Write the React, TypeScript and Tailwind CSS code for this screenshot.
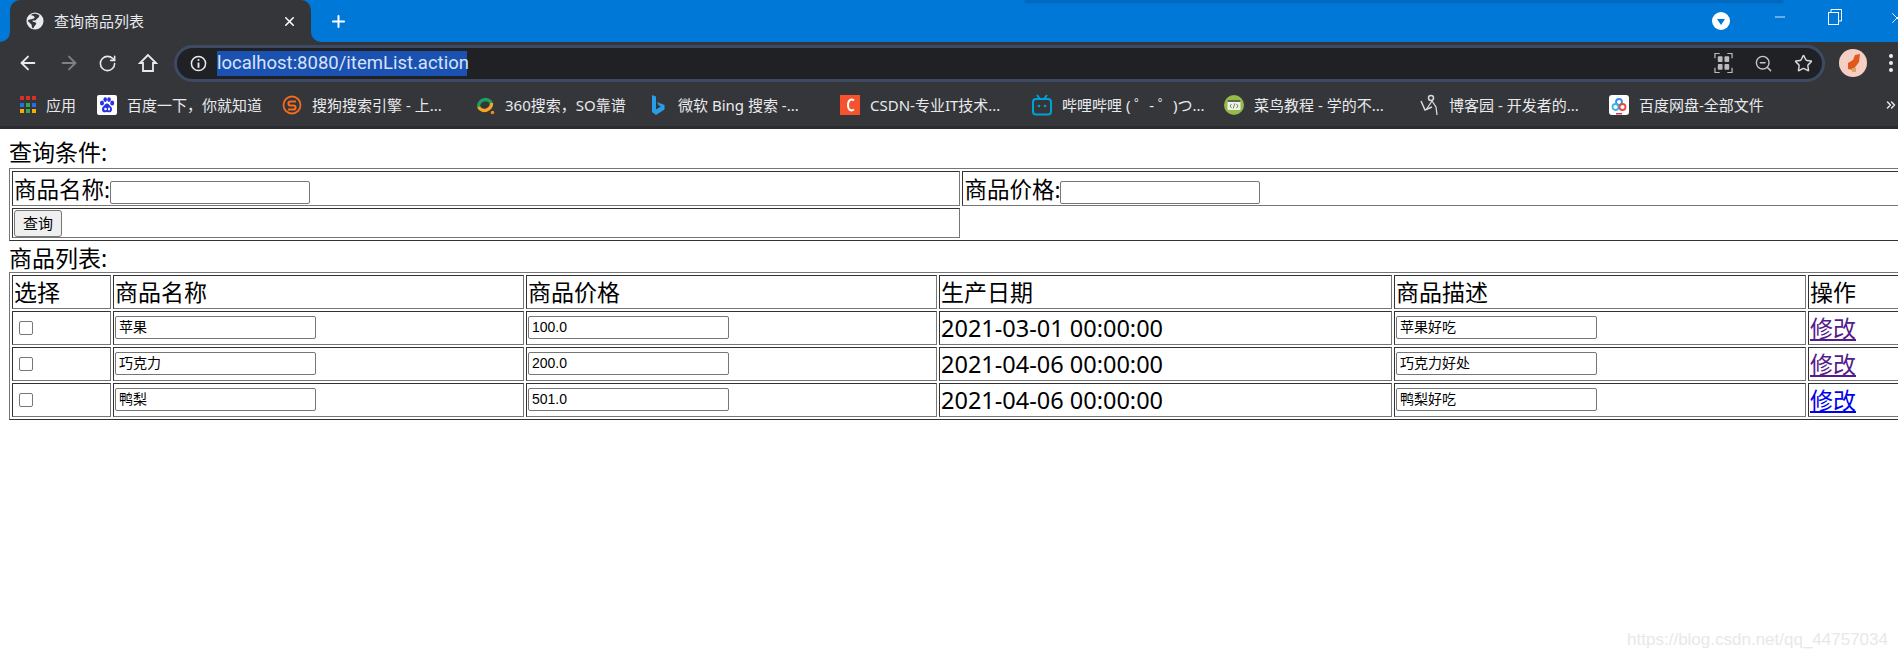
import { ArrowLeft, ArrowRight, RotateCw, ZoomOut, Star, X, Plus, Minus, ChevronsRight } from 'lucide-react';

const cjk = "font-['Noto_Sans','Noto_Sans_CJK_SC',sans-serif]";

function AppsIcon() {
  const colors = ['#d93025', '#d93025', '#d93025', '#1a73e8', '#34a853', '#1a73e8', '#f9ab00', '#34a853', '#f9ab00'];
  return (
    <span className="grid grid-cols-3 gap-[2px] w-[16px] h-[18px]">
      {colors.map((c, i) => (
        <svg key={i} viewBox="0 0 4 4" className="w-[4px] h-[4px]">
          <rect width="4" height="4" fill={c} />
        </svg>
      ))}
    </span>
  );
}

function BaiduIcon() {
  return (
    <svg viewBox="0 0 20 20" className="w-[20px] h-[20px]">
      <rect width="20" height="20" rx="2" fill="#fff" />
      <g fill="#2932e1">
        <ellipse cx="5" cy="8" rx="2" ry="2.6" />
        <ellipse cx="8.2" cy="4.6" rx="1.8" ry="2.4" />
        <ellipse cx="12" cy="4.6" rx="1.8" ry="2.4" />
        <ellipse cx="15.2" cy="8" rx="2" ry="2.6" />
        <path d="M10 8.5c-2 0-2.5 2-4 3.2-1.6 1.3-1.6 5.6 2 5.6 1 0 1.300-.3 2-.3s1 .3 2 .3c3.600 0 3.600-4.300 2-5.600-1.500-1.200-2-3.200-4-3.200z" />
      </g>
      <circle cx="8.500" cy="14" r="1.300" fill="#fff" />
      <rect x="11" y="12.500" width="2" height="3" rx="1" fill="#fff" />
    </svg>
  );
}

function SogouIcon() {
  return (
    <svg viewBox="0 0 20 20" className="w-[20px] h-[20px]" fill="none">
      <circle cx="10" cy="10" r="8.500" stroke="#f26b1d" strokeWidth="1.800" />
      <path d="M14 6.500H8.500a2 2 0 0 0 0 4h3a2 2 0 0 1 0 4H6" stroke="#f26b1d" strokeWidth="2.200" />
    </svg>
  );
}

function Icon360() {
  return (
    <svg viewBox="0 0 20 20" className="w-[20px] h-[20px]" fill="none">
      <path d="M3.500 12A7 7 0 0 1 16.500 8" stroke="#1aa15f" strokeWidth="3.400" />
      <path d="M16.500 8A7 7 0 0 1 3.500 12" stroke="#f6a623" strokeWidth="3.400" />
      <circle cx="17.500" cy="17.500" r="1.800" fill="#f08a24" />
    </svg>
  );
}

function BingIcon() {
  return (
    <svg viewBox="0 0 14 22" className="w-[14px] h-[22px]">
      <path d="M1 1l4 1.500v13l5-3-2.500-1.200L6 8l7.500 3v4.500L5 21l-4-3z" fill="#2a9de8" />
    </svg>
  );
}

function CsdnIcon() {
  return (
    <svg viewBox="0 0 20 20" className="w-[20px] h-[20px]" fill="none">
      <rect width="20" height="20" fill="#f4532e" />
      <path d="M14 5.500c-3-2-6-.5-6 4.500s3 6.500 6 4.500" stroke="#fff" strokeWidth="2" />
    </svg>
  );
}

function BiliIcon() {
  return (
    <svg viewBox="0 0 20 22" className="w-[20px] h-[22px]" fill="none">
      <rect x="1" y="5" width="18" height="15.500" rx="3" stroke="#00a1d6" strokeWidth="2" />
      <path d="M5 1l3 4M15 1l-3 4" stroke="#00a1d6" strokeWidth="2" />
      <circle cx="7" cy="12" r="1.300" fill="#00a1d6" />
      <circle cx="13" cy="12" r="1.300" fill="#00a1d6" />
    </svg>
  );
}

function RunoobIcon() {
  return (
    <svg viewBox="0 0 20 20" className="w-[20px] h-[20px]">
      <circle cx="10" cy="10" r="10" fill="#96b94a" />
      <rect x="3.500" y="5" width="13" height="10" rx="1" fill="#eef0ea" />
      <rect x="3.500" y="5" width="13" height="2" fill="#5a6b45" />
      <path d="M7.500 9l-1.500 2 1.500 2M12.500 9l1.500 2-1.500 2M10.800 8.500l-1.600 5" stroke="#5a6b45" strokeWidth="0.800" fill="none" />
    </svg>
  );
}

function CnblogsIcon() {
  return (
    <svg viewBox="0 0 18 24" className="w-[18px] h-[24px]" fill="none" stroke="#d8d8d8">
      <path d="M1 8l4 9 7-3" strokeWidth="1.500" />
      <circle cx="11" cy="5" r="2.500" strokeWidth="1.500" />
      <path d="M12 8l4 6 1 8M12 8l-6 9" strokeWidth="1.300" />
    </svg>
  );
}

function PanIcon() {
  return (
    <svg viewBox="0 0 20 20" className="w-[20px] h-[20px]" fill="none">
      <rect width="20" height="20" rx="3" fill="#fff" />
      <circle cx="10" cy="7" r="3" stroke="#2f8bf0" strokeWidth="1.800" />
      <circle cx="6.500" cy="12" r="3" stroke="#2fb5f0" strokeWidth="1.800" />
      <circle cx="13.500" cy="12" r="3" stroke="#e8493f" strokeWidth="1.800" />
      <rect x="7" y="18" width="6" height="1.500" fill="#d6335e" />
    </svg>
  );
}

const bookmarks = [
  { title: '应用', icon: <AppsIcon />, cls: 'w-[79px] gap-[8px]' },
  { title: '百度一下，你就知道', icon: <BaiduIcon />, cls: 'w-[185px] gap-[10px]' },
  { title: '搜狗搜索引擎 - 上...', icon: <SogouIcon />, cls: 'w-[193px] gap-[10px]' },
  { title: '360搜索，SO靠谱', icon: <Icon360 />, cls: 'w-[173px] gap-[10px]' },
  { title: '微软 Bing 搜索 -...', icon: <BingIcon />, cls: 'w-[192px] gap-[10px]' },
  { title: 'CSDN-专业IT技术...', icon: <CsdnIcon />, cls: 'w-[192px] gap-[10px]' },
  { title: '哔哩哔哩 ( ゜- ゜)つ...', icon: <BiliIcon />, cls: 'w-[192px] gap-[10px]' },
  { title: '菜鸟教程 - 学的不...', icon: <RunoobIcon />, cls: 'w-[195px] gap-[10px]' },
  { title: '博客园 - 开发者的...', icon: <CnblogsIcon />, cls: 'w-[190px] gap-[10px]' },
  { title: '百度网盘-全部文件', icon: <PanIcon />, cls: 'w-[170px] gap-[10px]' },
];

function BrowserChrome() {
  return (
    <div className={`${cjk} text-[#e8eaed]`}>
      {/* Tab strip */}
      <div className="relative flex h-[42px] bg-[#0078d7]">
        <div className="absolute left-[1025px] top-0 w-[758px] h-[3px] bg-[#0064b8] blur-[1px]" />
        <div className="relative ml-[10px] flex items-center w-[301px] h-[42px] rounded-t-[10px] bg-[#35363a] pl-[16px] pr-[14px]">
          <svg viewBox="0 0 10 10" className="absolute -left-[10px] bottom-0 w-[10px] h-[10px]">
            <path d="M0 10a10 10 0 0 0 10-10v10z" fill="#35363a" />
          </svg>
          <svg viewBox="0 0 10 10" className="absolute -right-[10px] bottom-0 w-[10px] h-[10px]">
            <path d="M10 10A10 10 0 0 1 0 0v10z" fill="#35363a" />
          </svg>
          <svg viewBox="0 0 20 20" className="w-[18px] h-[18px] shrink-0">
            <circle cx="10" cy="10" r="9.500" fill="#e8eaed" />
            <path d="M5 3.500c2 0 4 .5 4.500 2S7 8 5.500 8 2 9 2 10l4 4 1 4c2 0 2-2 3-3s2-2 1-3-4-1-4-2 3 0 4-1 1-2 3-3l1-2c-3-2.500-7-2.500-10-.5z" fill="#35363a" />
          </svg>
          <span className="ml-[10px] flex-1 text-[15px] leading-none">查询商品列表</span>
          <X className="w-[15px] h-[15px] text-white" strokeWidth={2.500} />
        </div>
        <Plus className="ml-[18px] mt-[12px] w-[19px] h-[19px] text-white" strokeWidth={2.500} />
        <div className="ml-auto flex items-center h-[42px]">
          <svg viewBox="0 0 18 18" className="w-[18px] h-[20px] mr-[42px]">
            <circle cx="9" cy="9" r="9" fill="#fff" />
            <path d="M5 7h8l-4 6z" fill="#0078d7" />
          </svg>
          <Minus className="w-[16px] h-[16px] text-white mb-[8px] mr-[40px]" strokeWidth={1.200} />
          <svg viewBox="0 0 14 16" className="w-[14px] h-[16px] mb-[8px] mr-[46px]" fill="none" stroke="#fff">
            <rect x="0.500" y="3.500" width="10" height="12" />
            <path d="M3 3V.5h10.500v11.500H11" />
          </svg>
          <X className="w-[18px] h-[18px] text-white mb-[6px] -mr-[8px]" strokeWidth={1.200} />
        </div>
      </div>

      {/* Toolbar */}
      <div className="flex items-center h-[42px] bg-[#35363a]">
        <ArrowLeft className="ml-[17px] w-[22px] h-[22px] text-[#e8eaed]" strokeWidth={2} />
        <ArrowRight className="ml-[19px] w-[22px] h-[22px] text-[#7f8185]" strokeWidth={2} />
        <RotateCw className="ml-[18px] w-[19px] h-[19px] text-[#e8eaed]" strokeWidth={2} />
        <svg viewBox="0 0 20 20" className="ml-[21px] w-[20px] h-[20px]" fill="none" stroke="#e8eaed" strokeWidth="1.800">
          <path d="M10 2L2 10h3v8h10v-8h3z" strokeLinejoin="miter" />
        </svg>
        <div className="ml-[16px] flex items-center w-[1651px] h-[37px] rounded-full border-[3px] border-[#3e4a63] bg-[#202124] pl-[13px]">
          <svg viewBox="0 0 18 18" className="w-[17px] h-[17px] shrink-0" fill="none" stroke="#e8eaed">
            <circle cx="9" cy="9" r="7.500" strokeWidth="1.600" />
            <path d="M9 8v5.500" strokeWidth="2" />
            <circle cx="9" cy="5.300" r="1.100" fill="#e8eaed" stroke="none" />
          </svg>
          <span className="ml-[10px] bg-[#1b51b0] text-[#d5e3fb] text-[18.5px] font-['Roboto',sans-serif] leading-[25px] w-[250px] whitespace-nowrap">
            localhost:8080/itemList.action
          </span>
          <div className="ml-auto mr-[9px] flex items-center gap-[21px]">
            <svg viewBox="0 0 20 22" className="w-[19px] h-[22px]" fill="none" stroke="#b9bbbe">
              <path d="M1 6V1h5M14 1h5v5M19 16v5h-5M6 21H1v-5" strokeWidth="1.300" />
              <rect x="4" y="4" width="5" height="6" rx="1" fill="#b9bbbe" stroke="none" />
              <rect x="11" y="4" width="5" height="6" rx="1" fill="#b9bbbe" stroke="none" />
              <rect x="4" y="12" width="5" height="6" rx="1" fill="#b9bbbe" stroke="none" />
              <rect x="11" y="12" width="5" height="6" rx="1" fill="#b9bbbe" stroke="none" />
            </svg>
            <ZoomOut className="w-[19px] h-[19px] text-[#c4c6c9]" strokeWidth={1.800} />
            <Star className="w-[19px] h-[19px] text-[#d8dade]" strokeWidth={1.800} />
          </div>
        </div>
        <svg viewBox="0 0 28 28" className="ml-[14px] w-[28px] h-[28px] shrink-0">
          <circle cx="14" cy="14" r="14" fill="#f6cfc4" />
          <path d="M9 14l5-3 2-5 5-1-1 8-3 4-3 4-5-1z" fill="#e2581c" />
          <rect x="13" y="19" width="4" height="4" fill="#d8a860" />
        </svg>
        <svg viewBox="0 0 6 20" className="ml-[21px] w-[6px] h-[20px] shrink-0" fill="#e8eaed">
          <circle cx="3" cy="3" r="2" />
          <circle cx="3" cy="10" r="2" />
          <circle cx="3" cy="17" r="2" />
        </svg>
      </div>

      {/* Bookmarks bar */}
      <div className="flex items-center h-[45px] pl-[18px] bg-[#35363a] border-b-[3px] border-[#2b2c2f]">
        {bookmarks.map((b) => (
          <div key={b.title} className={`flex items-center shrink-0 ${b.cls}`}>
            <span className="flex items-center justify-center w-[20px] shrink-0">{b.icon}</span>
            <span className="text-[15px] leading-none whitespace-nowrap">{b.title}</span>
          </div>
        ))}
        <ChevronsRight className="ml-auto w-[14px] h-[14px] text-[#e8eaed]" strokeWidth={2.500} />
      </div>
    </div>
  );
}

const tableCls = 'table-fixed border-separate border-spacing-[2px] border border-t-[#767676] border-l-[#767676] border-r-[#333333] border-b-[#333333]';
const cellCls = 'p-0 pl-[1px] border border-t-[#333333] border-l-[#333333] border-r-[#767676] border-b-[#767676] text-left font-normal align-middle';
const inputCls = "h-[23px] border border-[#767676] rounded-[2px] bg-white px-[3px] text-[14px] font-['Liberation_Sans','Noto_Sans_CJK_SC',sans-serif] text-black align-middle";

const items = [
  { name: '苹果', price: '100.0', date: '2021-03-01 00:00:00', desc: '苹果好吃', link: 'text-[#551a8b]' },
  { name: '巧克力', price: '200.0', date: '2021-04-06 00:00:00', desc: '巧克力好处', link: 'text-[#551a8b]' },
  { name: '鸭梨', price: '501.0', date: '2021-04-06 00:00:00', desc: '鸭梨好吃', link: 'text-[#0000ee]' },
];

function ItemPage() {
  return (
    <div className={`${cjk} pt-[8px] pl-[9px] text-black text-[23px] leading-[31px]`}>
      <div className="h-[31px] leading-[31px]">查询条件:</div>
      <table className={`${tableCls} w-[1950px]`}>
        <colgroup>
          <col className="w-[946px]" />
          <col className="w-[991px]" />
        </colgroup>
        <tbody>
          <tr className="h-[35px]">
            <td className={cellCls}>
              <span className="flex items-end h-[33px] text-[22.5px]">
                商品名称:
                <input className={`${inputCls} w-[200px] mb-[1px]`} readOnly />
              </span>
            </td>
            <td className={cellCls}>
              <span className="flex items-end h-[33px] text-[22.5px]">
                商品价格:
                <input className={`${inputCls} w-[200px] mb-[1px]`} readOnly />
              </span>
            </td>
          </tr>
          <tr className="h-[30px]">
            <td className={cellCls}>
              <button className="block w-[48px] h-[27px] rounded-[3px] border border-[#767676] bg-[#efefef] text-[15px] leading-none text-black">
                查询
              </button>
            </td>
            <td />
          </tr>
        </tbody>
      </table>
      <div className="h-[31px] leading-[34px]">商品列表:</div>
      <table className={`${tableCls} w-[1990px]`}>
        <colgroup>
          <col className="w-[99px]" />
          <col className="w-[411px]" />
          <col className="w-[411px]" />
          <col className="w-[453px]" />
          <col className="w-[412px]" />
          <col className="w-[190px]" />
        </colgroup>
        <thead>
          <tr className="h-[34px]">
            {['选择', '商品名称', '商品价格', '生产日期', '商品描述', '操作'].map((h) => (
              <th key={h} className={cellCls}>{h}</th>
            ))}
          </tr>
        </thead>
        <tbody>
          {items.map((item) => (
            <tr key={item.name} className="h-[34px]">
              <td className={cellCls}>
                <input type="checkbox" readOnly className="block ml-[5px] w-[14px] h-[14px] appearance-none rounded-[2px] border border-[#767676] bg-white" />
              </td>
              <td className={cellCls}>
                <input className={`${inputCls} w-[201px] block -mt-[1px]`} value={item.name} readOnly />
              </td>
              <td className={cellCls}>
                <input className={`${inputCls} w-[201px] block -mt-[1px]`} value={item.price} readOnly />
              </td>
              <td className={`${cellCls} text-[23.5px]`}>{item.date}</td>
              <td className={cellCls}>
                <input className={`${inputCls} w-[201px] block -mt-[1px]`} value={item.desc} readOnly />
              </td>
              <td className={cellCls}>
                <a href="#" className={`underline text-[23px] ${item.link}`}>修改</a>
              </td>
            </tr>
          ))}
        </tbody>
      </table>
    </div>
  );
}

export default function App() {
  return (
    <div className="relative w-[1898px] h-[658px] overflow-hidden bg-white">
      <BrowserChrome />
      <ItemPage />
      <span className="absolute right-[10px] bottom-[10px] text-[17px] leading-none text-[#e8e8e8] font-['Liberation_Sans',sans-serif]">
        https://blog.csdn.net/qq_44757034
      </span>
    </div>
  );
}
